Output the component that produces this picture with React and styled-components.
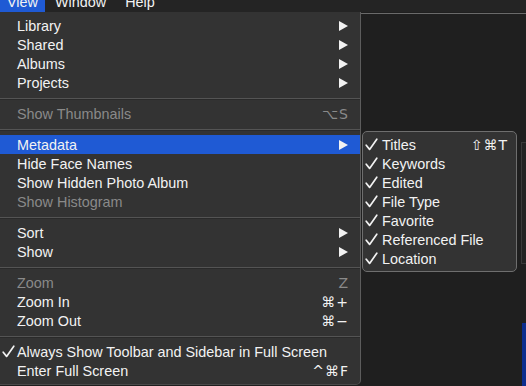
import React from 'react'
import styled, { createGlobalStyle } from 'styled-components'

const GlobalStyle = createGlobalStyle`
  html, body {
    margin: 0;
    padding: 0;
    background: #1f1f1f;
  }
  body {
    font-family: "Liberation Sans", Arial, sans-serif;
    -webkit-font-smoothing: antialiased;
  }
`

const Screen = styled.div`
  width: 526px;
  height: 386px;
  overflow: hidden;
  display: flex;
  flex-direction: column;
  background: #1f1f1f;
`

const MenuBar = styled.div`
  height: 12px;
  display: flex;
  background: #242424;
  flex-shrink: 0;
`

const BarItem = styled.div`
  height: 12px;
  padding: 0 ${p => p.$pad || 10}px;
  background: ${p => (p.$active ? '#1f5ad4' : 'transparent')};
  color: #f2f2f2;
  font-size: 14.4px;
  line-height: 12px;
  overflow: hidden;
  span {
    display: block;
    margin-top: -4px;
  }
`

const Body = styled.div`
  flex: 1;
  display: flex;
  position: relative;
`

const Menu = styled.div`
  width: 360px;
  padding: 4px 0;
  background: #333333;
  border-right: 1px solid #5c5c5c;
  border-bottom: 1px solid #4a4a4a;
  border-bottom-right-radius: 5px;
  align-self: flex-start;
`

const Row = styled.div`
  height: 19px;
  display: flex;
  align-items: center;
  padding: 0 ${p => p.$right || 12}px 0 ${p => p.$left || 17}px;
  position: relative;
  background: ${p => (p.$active ? '#1f5ad4' : 'transparent')};
  color: ${p => (p.$disabled ? '#8a8a8a' : '#f2f2f2')};
  font-size: 14.4px;
  white-space: nowrap;
`

const Label = styled.span`
  flex: 1;
`

const CheckBox = styled.span`
  position: absolute;
  left: ${p => p.$left}px;
  top: 3px;
  width: 13px;
  height: 13px;
  display: flex;
`

const Shortcut = styled.span`
  font-family: "DejaVu Sans", "Liberation Sans", sans-serif;
  font-size: 14px;
  letter-spacing: 1px;
`

const Separator = styled.div`
  height: 12px;
  display: flex;
  align-items: center;
  &::after {
    content: '';
    flex: 1;
    height: 1px;
    background: #545454;
    box-shadow: 0 1px 0 #2a2a2a;
  }
`

const Backdrop = styled.div`
  flex: 1;
  margin-top: 1px;
  border-top: 1px solid #6a6a6a;
  background: #1f1f1f;
  display: flex;
  flex-direction: column;
  align-items: flex-end;
`

const EdgePanel = styled.div`
  margin-top: 128px;
  width: 4px;
  height: 120px;
  border: 1px solid #3a3a3a;
  border-right: none;
  background: #232323;
`

const BlueEdge = styled.div`
  margin-top: 59px;
  width: 4px;
  flex: 1;
  background: #0c2d8e;
`

const SubMenu = styled.div`
  position: absolute;
  left: 362px;
  top: 119px;
  width: 153px;
  padding: 3px 0 3px;
  background: #333333;
  border: 1px solid #6e6e6e;
  border-radius: 5px;
`

const Arrow = () => (
  <svg width="9" height="10" viewBox="0 0 9 10">
    <polygon points="0,0 9,5 0,10" fill="#f2f2f2" />
  </svg>
)

const Check = ({ left }) => (
  <CheckBox $left={left}>
    <svg width="13" height="13" viewBox="0 0 13 13">
      <path d="M1.2 7.2 L4.6 11.4 L11.8 1.2" fill="none" stroke="#f2f2f2" strokeWidth="1.7" strokeLinecap="round" strokeLinejoin="round" />
    </svg>
  </CheckBox>
)

const mainItems = [
  { label: 'Library', arrow: true },
  { label: 'Shared', arrow: true },
  { label: 'Albums', arrow: true },
  { label: 'Projects', arrow: true },
  'sep',
  { label: 'Show Thumbnails', disabled: true, key: '⌥S' },
  'sep',
  { label: 'Metadata', arrow: true, active: true },
  { label: 'Hide Face Names' },
  { label: 'Show Hidden Photo Album' },
  { label: 'Show Histogram', disabled: true },
  'sep',
  { label: 'Sort', arrow: true },
  { label: 'Show', arrow: true },
  'sep',
  { label: 'Zoom', disabled: true, key: 'Z' },
  { label: 'Zoom In', key: '⌘+' },
  { label: 'Zoom Out', key: '⌘−' },
  'sep',
  { label: 'Always Show Toolbar and Sidebar in Full Screen', checked: true },
  { label: 'Enter Full Screen', key: '^⌘F' },
]

const subItems = [
  { label: 'Titles', key: '⇧⌘T' },
  { label: 'Keywords' },
  { label: 'Edited' },
  { label: 'File Type' },
  { label: 'Favorite' },
  { label: 'Referenced File' },
  { label: 'Location' },
]

export default function App() {
  return (
    <Screen>
      <GlobalStyle />
      <MenuBar>
        <BarItem $active $pad={7}><span>View</span></BarItem>
        <BarItem><span>Window</span></BarItem>
        <BarItem $pad={9}><span>Help</span></BarItem>
      </MenuBar>
      <Body>
        <Menu>
          {mainItems.map((item, i) => {
            if (item === 'sep') return <Separator key={i} />
            return (
              <Row key={i} $active={item.active} $disabled={item.disabled} $right={item.arrow ? 12 : 11}>
                {item.checked && <Check left={2} />}
                <Label>{item.label}</Label>
                {item.arrow && <Arrow />}
                {item.key && <Shortcut>{item.key}</Shortcut>}
              </Row>
            )
          })}
        </Menu>
        <Backdrop>
          <EdgePanel />
          <BlueEdge />
        </Backdrop>
        <SubMenu>
          {subItems.map((item, i) => (
            <Row key={i} $right={8} $left={19}>
              <Check left={2} />
              <Label>{item.label}</Label>
              {item.key && <Shortcut>{item.key}</Shortcut>}
            </Row>
          ))}
        </SubMenu>
      </Body>
    </Screen>
  )
}
